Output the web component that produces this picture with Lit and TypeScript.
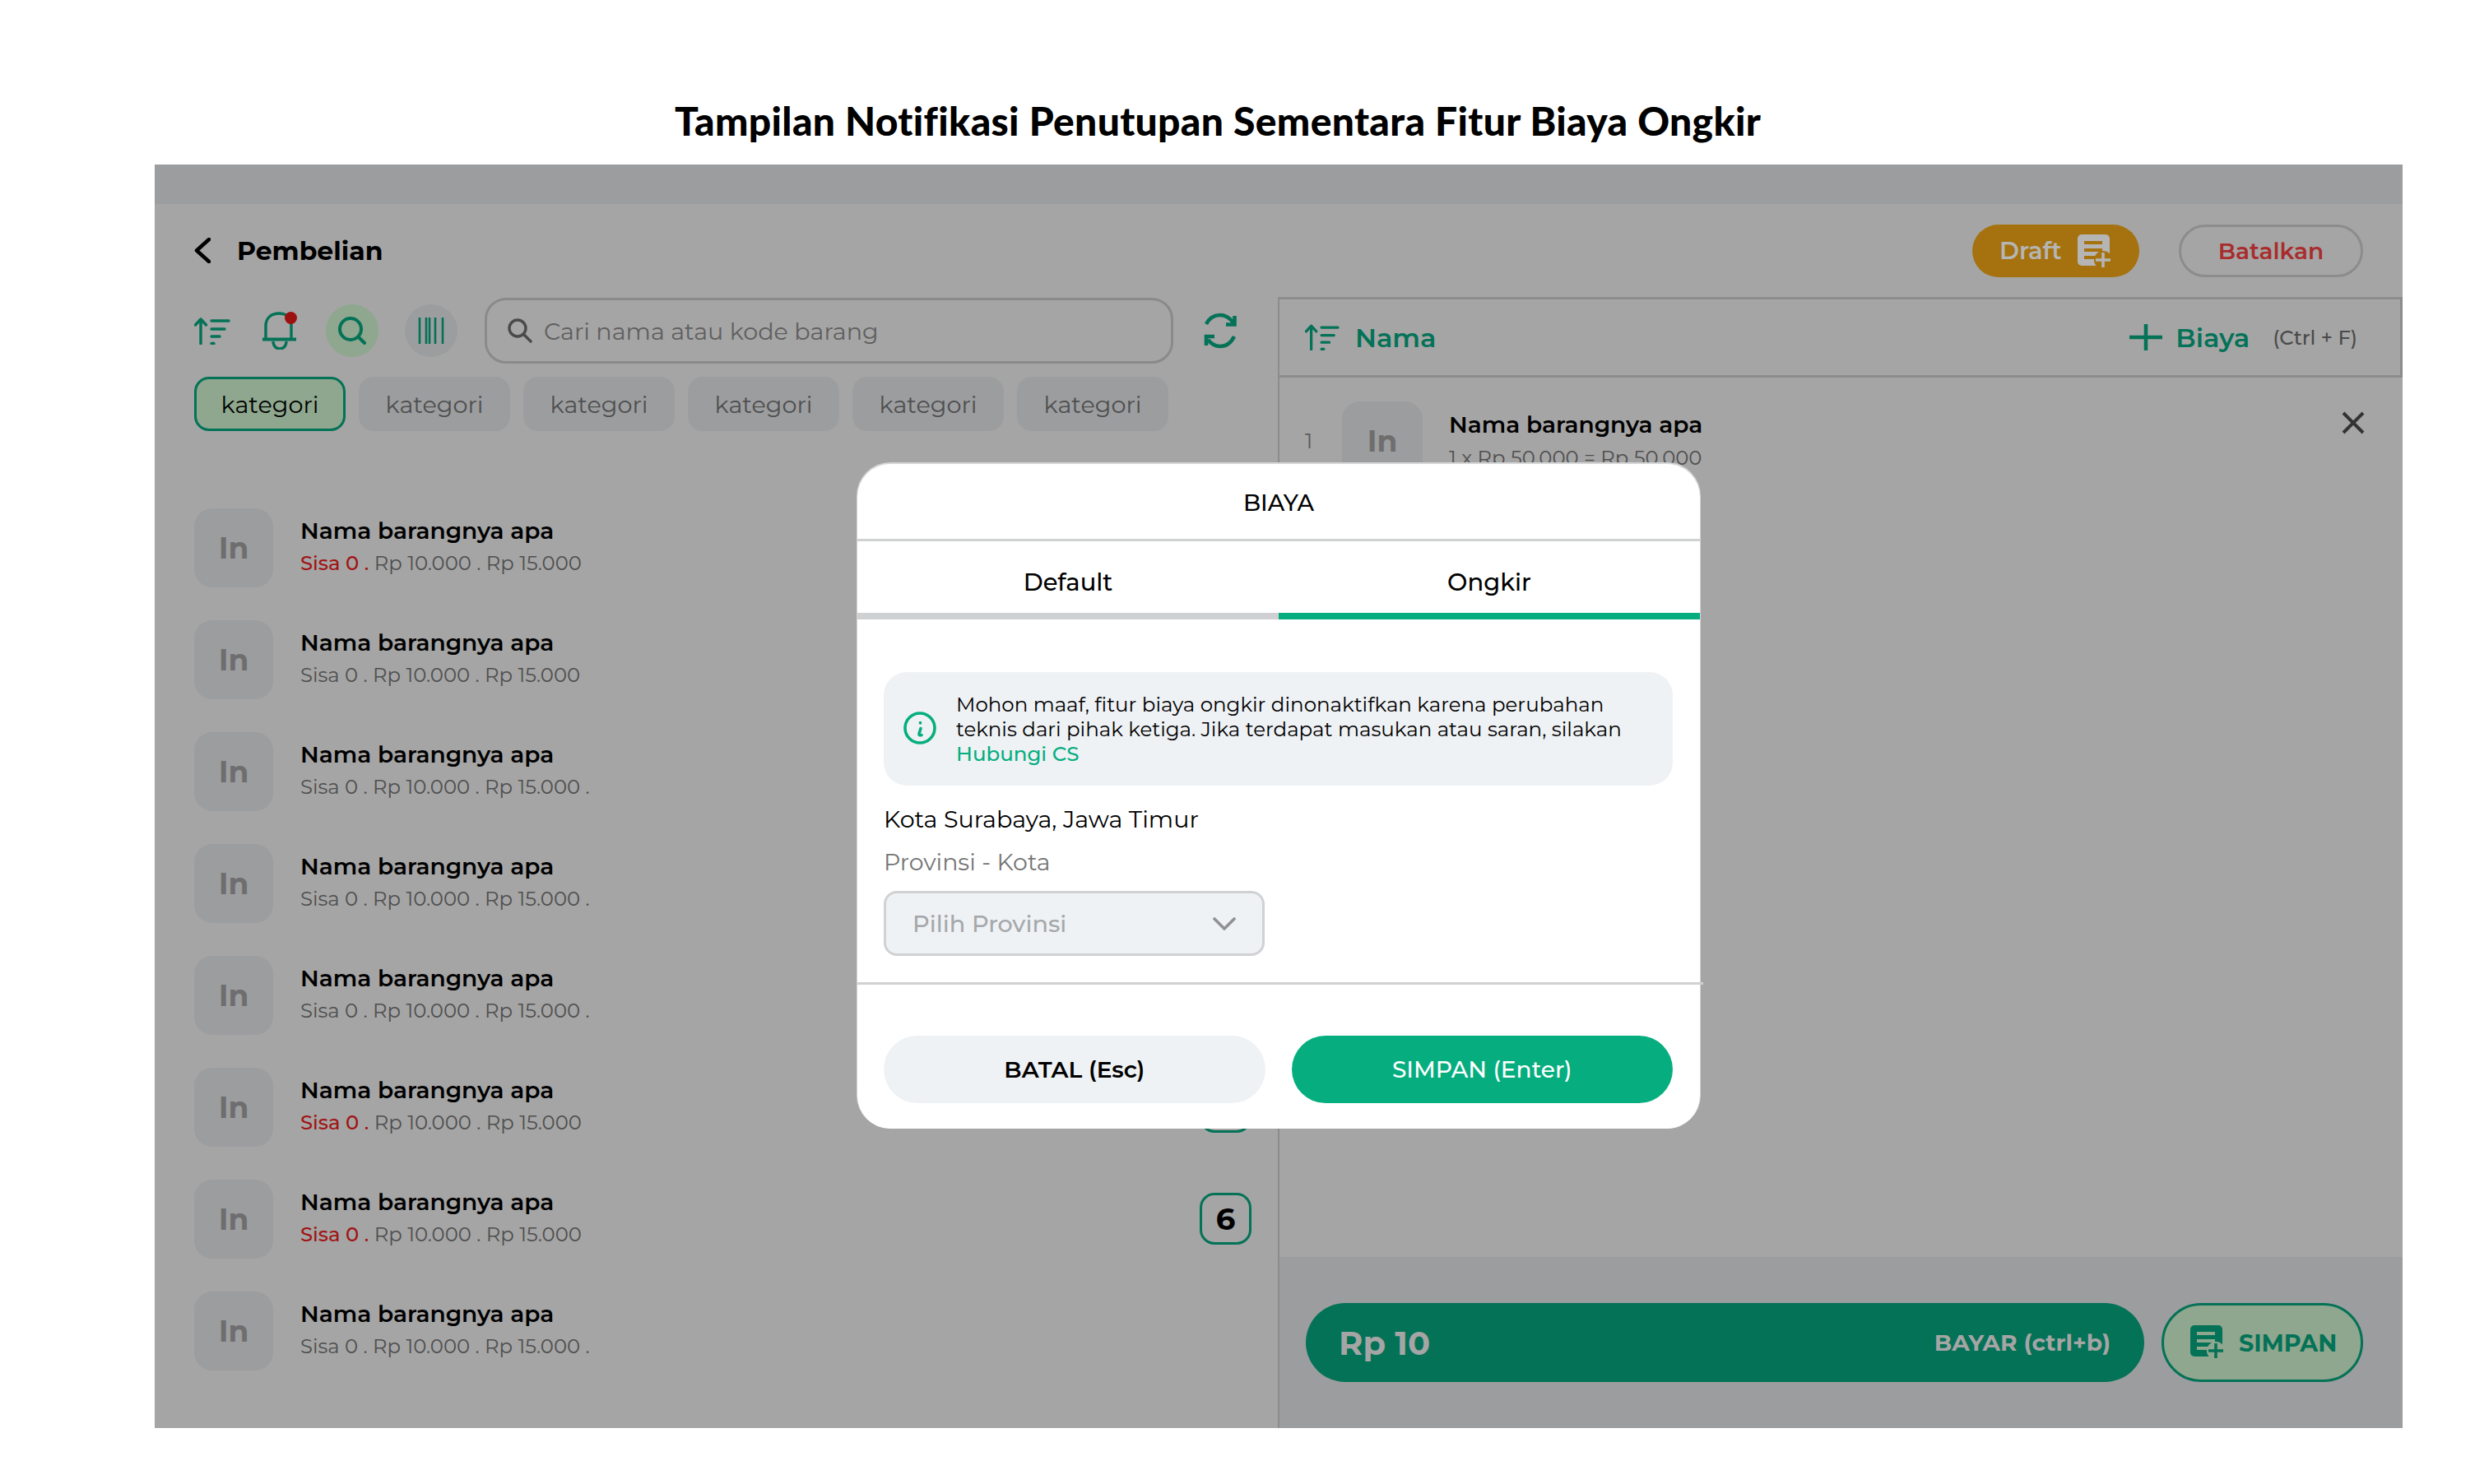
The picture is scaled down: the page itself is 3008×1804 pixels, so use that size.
import { LitElement, html, css } from "lit";
import { customElement } from "lit/decorators.js";

const sortIcon = (w: number, h: number) => html`<svg class="ic" width=${w} height=${h} viewBox="0 0 44 33" fill="none" stroke="#047257" stroke-width="3.4" stroke-linecap="round" stroke-linejoin="round"><path d="M8 32V2M1.5 9L8 2l6.5 7"/><path d="M21 4h21M21 14h16M21 23h10M21 31.5h3"/></svg>`;
const docIcon = (fg: string, bg: string) => html`<svg class="ic" width="42" height="42" viewBox="0 0 42 42"><rect x="0" y="0" width="39" height="38" rx="5" fill=${fg}/><path d="M8 10h22M8 19h22M8 28h13" stroke=${bg} stroke-width="4"/><circle cx="31" cy="31" r="11" fill=${bg}/><path d="M31 22v18M22 31h18" stroke=${fg} stroke-width="3.6"/></svg>`;

const rows = [
  { red: true, dot: false }, { red: false, dot: false }, { red: false, dot: true }, { red: false, dot: true },
  { red: false, dot: true }, { red: true, dot: false, badge: "" }, { red: true, dot: false, badge: "6" }, { red: false, dot: true },
];

@customElement("app-root")
export class AppRoot extends LitElement {
  static styles = css`
    :host { display: block; width: 3008px; height: 1804px; background: #fff; font-family: "Montserrat", Inter, "Liberation Sans", sans-serif; color: #000; overflow: hidden; }
    * { box-sizing: border-box; }
    .ic { display: block; flex: none; }
    .title { height: 200px; padding: 92px 0 0 820px; display: flex; align-items: center; font-family: Lato, "Open Sans", sans-serif; font-weight: 900; font-size: 48px; letter-spacing: 0.33px; white-space: nowrap; }
    .frame { position: relative; margin-left: 188px; width: 2732px; height: 1536px; background: #a5a5a5; display: flex; flex-direction: column; }
    .strip { height: 48px; background: #9c9d9f; flex: none; }
    .head { height: 113px; flex: none; display: flex; align-items: center; padding: 0 48px; }
    .back { margin-right: 32px; }
    .head h1 { margin: 0; font-size: 31.5px; font-weight: 700; flex: 1; }
    .draft { width: 203px; height: 64px; border-radius: 32px; background: #a5720f; color: #b5b5b5; display: flex; align-items: center; justify-content: space-between; padding: 0 33px 0 33px; font-size: 29px; font-weight: 600; }
    .draft .ic { margin: 3px 0 0 0; }
    .cancel { margin-left: 48px; width: 224px; height: 64px; border-radius: 32px; border: 3px solid #8c8c8c; color: #a82c2c; display: flex; align-items: center; justify-content: center; font-size: 28px; font-weight: 600; }
    .cols { flex: 1; display: flex; min-height: 0; }
    .left { width: 1367px; flex: none; border-right: 2px solid #8c8c8c; padding: 1px 0 0 48px; }
    .tools { height: 80px; display: flex; align-items: center; }
    .tools .m39 { margin-left: 39px; }
    .circle { width: 64px; height: 64px; border-radius: 50%; display: flex; align-items: center; justify-content: center; margin-left: 35px; background: #8fa78e; }
    .circle.off { background: #9c9d9f; margin-left: 32px; }
    .search { margin-left: 33px; width: 837px; height: 80px; border: 3px solid #8a8a8a; border-radius: 26px; display: flex; align-items: center; padding-left: 25px; gap: 14px; color: #5f5f5f; font-size: 28.6px; white-space: nowrap; }
    .refresh { margin-left: 36px; }
    .chips { margin-top: 16px; display: flex; gap: 16px; }
    .chip { width: 184px; height: 66px; border-radius: 18px; background: #9c9d9f; color: #4f4f4f; display: flex; align-items: center; justify-content: center; font-size: 28.7px; }
    .chip.on { background: #8fa78e; border: 3px solid #047257; color: #000; }
    .list { margin-top: 94px; display: flex; flex-direction: column; gap: 40px; }
    .row { height: 96px; display: flex; position: relative; padding-right: 32px; }
    .thumb { width: 96px; height: 96px; flex: none; border-radius: 22px; background: #9c9d9f; color: #6e6e6e; display: flex; align-items: center; justify-content: center; font-size: 36px; font-weight: 700; }
    .info { margin-left: 33px; flex: 1; }
    .name { font-size: 28px; font-weight: 600; line-height: 36px; margin-top: 9px; white-space: nowrap; }
    .sub { font-size: 24.3px; line-height: 32px; margin-top: 5px; color: #4f4f4f; white-space: nowrap; }
    .sub b { font-weight: 500; color: #a01414; }
    .badge { width: 63px; height: 63px; margin-top: 16px; border: 3px solid #047257; border-radius: 18px; display: flex; align-items: center; justify-content: center; font-size: 37px; font-weight: 700; }
    .right { flex: 1; display: flex; flex-direction: column; min-width: 0; }
    .rhead { height: 98px; flex: none; border-top: 3px solid #8c8c8c; border-bottom: 3px solid #8c8c8c; border-right: 3px solid #8c8c8c; display: flex; align-items: center; padding-left: 31px; color: #047257; font-size: 32px; font-weight: 600; }
    .rhead .nm { margin-left: 19px; flex: 1; }
    .rhead .bi { margin-left: 16px; }
    .rhead .ct { margin-left: 28px; margin-right: 52px; font-size: 24.3px; font-weight: 500; color: #4a4a4a; }
    .ritem { flex: 1; display: flex; padding: 29px 46px 0 31px; min-height: 0; }
    .ritem .no { width: 45px; padding-top: 32px; font-size: 26px; color: #5c5c5c; }
    .ritem .thumb { width: 98px; }
    .ritem .info { margin-left: 32px; }
    .ritem .name { margin-top: 10px; }
    .ritem .sub { margin-top: 6px; }
    .ritem .x { margin-top: 12px; }
    .foot { height: 208px; flex: none; background: #9c9d9f; display: flex; padding: 56px 47px 0 32px; gap: 21px; }
    .pay { width: 1019px; height: 96px; border-radius: 48px; background: #047257; color: #a5a5a5; display: flex; align-items: center; justify-content: space-between; padding: 0 41px 0 40px; font-weight: 700; }
    .pay .a { font-size: 40px; }
    .pay .b { font-size: 28px; font-weight: 700; }
    .sv { width: 245px; height: 96px; border-radius: 48px; background: #8fa78e; border: 3px solid #047257; color: #047257; display: flex; align-items: center; padding-left: 32px; gap: 17px; font-size: 28.5px; font-weight: 700; }
    .modal { position: absolute; left: 854px; top: 364px; width: 1024px; height: 808px; background: #fff; border-radius: 40px; box-shadow: 0 -1px 0 1px #d4d5d6; display: flex; flex-direction: column; }
    .mt { height: 94px; flex: none; display: flex; align-items: center; justify-content: center; font-size: 28px; font-weight: 500; border-bottom: 3px solid #d0d1d3; padding-top: 2px; }
    .tabs { height: 95px; flex: none; display: flex; }
    .tab { flex: 1 1 0; display: flex; align-items: center; justify-content: center; border-bottom: 8px solid #cfd0d2; font-size: 29px; font-weight: 500; padding-top: 12px; }
    .tab.on { border-bottom-color: #06ae7f; }
    .mb { padding: 64px 33px 0 32px; flex: 1; display: flex; flex-direction: column; }
    .note { height: 138px; flex: none; border-radius: 28px; background: #eff2f5; display: flex; align-items: center; padding: 0 24px; gap: 24px; font-size: 24.5px; line-height: 30px; }
    .note .ic { margin-top: -2px; }
    .note a { color: #06ae7f; font-weight: 500; display: block; }
    .city { margin-top: 21px; font-size: 28.6px; line-height: 40px; font-weight: 400; }
    .lbl { margin-top: 12px; font-size: 28.4px; line-height: 40px; color: #757575; }
    .sel { margin-top: 15px; width: 463px; height: 79px; flex: none; background: #eff2f5; border: 3px solid #d0d1d3; border-radius: 16px; display: flex; align-items: center; justify-content: space-between; padding: 0 32px 0 32px; font-size: 28.7px; font-weight: 500; color: #a5a8ab; }
    .rule { height: 3px; flex: none; background: #d0d1d3; margin: 32px -37px 0 -32px; }
    .btns { margin-top: 62px; display: flex; gap: 32px; }
    .btn { flex: 1 1 0; height: 82px; border-radius: 41px; background: #eff2f5; display: flex; align-items: center; justify-content: center; font-size: 28px; font-weight: 600; }
    .btn.go { background: #06ae7f; color: #fff; font-weight: 500; }
  `;

  renderRow(r: any) {
    return html`<div class="row">
      <div class="thumb">In</div>
      <div class="info">
        <div class="name">Nama barangnya apa</div>
        <div class="sub">${r.red ? html`<b>Sisa 0 .</b> Rp 10.000 . Rp 15.000` : html`Sisa 0 . Rp 10.000 . Rp 15.000${r.dot ? " ." : ""}`}</div>
      </div>
      ${r.badge !== undefined ? html`<div class="badge">${r.badge}</div>` : ""}
    </div>`;
  }

  render() {
    return html`
      <div class="title">Tampilan Notifikasi Penutupan Sementara Fitur Biaya Ongkir</div>
      <div class="frame">
        <div class="strip"></div>
        <div class="head">
          <svg class="ic back" width="20" height="31" viewBox="0 0 20 31" fill="none" stroke="#000" stroke-width="4.5" stroke-linecap="round" stroke-linejoin="round"><path d="M18 2L3 15.5 18 29"/></svg>
          <h1>Pembelian</h1>
          <div class="draft">Draft ${docIcon("#b5b5b5", "#a5720f")}</div>
          <div class="cancel">Batalkan</div>
        </div>
        <div class="cols">
          <div class="left">
            <div class="tools">
              ${sortIcon(44, 33)}
              <svg class="ic m39" width="42" height="46" viewBox="0 0 42 46" fill="none" stroke="#047257" stroke-width="3.4"><path d="M4 33V17C4 8 10 2 20 2s15 6 15 15v16"/><path d="M0 33.5h41" stroke-width="4"/><path d="M13 36c0 12 16 12 16 0"/><circle cx="34.5" cy="7.5" r="7.5" fill="#9c1010" stroke="none"/></svg>
              <div class="circle"><svg class="ic" width="34" height="34" viewBox="0 0 34 34" fill="none" stroke="#047257" stroke-width="4" stroke-linecap="round"><circle cx="15" cy="15" r="13"/><path d="M25 25l7 7"/></svg></div>
              <div class="circle off"><svg class="ic" width="32" height="32" viewBox="0 0 32 32" stroke="#047257" stroke-width="2.6"><path d="M2 0v32M10 0v32M14 0v32M21 0v32M30 0v32"/></svg></div>
              <div class="search">
                <svg class="ic" width="30" height="30" viewBox="0 0 30 30" fill="none" stroke="#4a4a4a" stroke-width="3.4" stroke-linecap="round"><circle cx="12" cy="12" r="10"/><path d="M20 20l8 8"/></svg>
                Cari nama atau kode barang
              </div>
              <svg class="ic refresh" width="42" height="44" viewBox="0 0 42 44" fill="none" stroke="#047257" stroke-width="4.6"><path d="M4 14C8 6 14 3 21 3c6 0 11 3 16 9"/><path d="M38.500 4v10.500H28"/><path d="M38 29c-4 8-10 12-17 12-6 0-11-3-15-8"/><path d="M14 29H4v11"/></svg>
            </div>
            <div class="chips">
              ${[0, 1, 2, 3, 4, 5].map((i) => html`<div class="chip ${i === 0 ? "on" : ""}">kategori</div>`)}
            </div>
            <div class="list">${rows.map((r) => this.renderRow(r))}</div>
          </div>
          <div class="right">
            <div class="rhead">
              ${sortIcon(42, 32)}
              <span class="nm">Nama</span>
              <svg class="ic" width="40" height="32" viewBox="0 0 40 32" stroke="#047257" stroke-width="4.5"><path d="M20 0v32M0 16h40"/></svg>
              <span class="bi">Biaya</span>
              <span class="ct">(Ctrl + F)</span>
            </div>
            <div class="ritem">
              <div class="no">1</div>
              <div class="thumb">In</div>
              <div class="info">
                <div class="name">Nama barangnya apa</div>
                <div class="sub">1 x Rp 50.000 = Rp 50.000</div>
              </div>
              <svg class="ic x" width="28" height="28" viewBox="0 0 28 28" stroke="#333" stroke-width="4"><path d="M2 2l24 24M26 2L2 26"/></svg>
            </div>
            <div class="foot">
              <div class="pay"><span class="a">Rp 10</span><span class="b">BAYAR (ctrl+b)</span></div>
              <div class="sv">${docIcon("#047257", "#8fa78e")} SIMPAN</div>
            </div>
          </div>
        </div>
        <div class="modal">
          <div class="mt">BIAYA</div>
          <div class="tabs"><div class="tab">Default</div><div class="tab on">Ongkir</div></div>
          <div class="mb">
            <div class="note">
              <svg class="ic" width="40" height="40" viewBox="0 0 40 40" fill="none" stroke="#06ae7f" stroke-width="3.6" stroke-linecap="round"><circle cx="20" cy="20" r="18"/><path d="M21 20.500l-2 6.500c-.3 1.500 1 2.200 3 1.600"/><path d="M20.500 13.500v.4"/></svg>
              <div>Mohon maaf, fitur biaya ongkir dinonaktifkan karena perubahan<br>teknis dari pihak ketiga. Jika terdapat masukan atau saran, silakan<a>Hubungi CS</a></div>
            </div>
            <div class="city">Kota Surabaya, Jawa Timur</div>
            <div class="lbl">Provinsi - Kota</div>
            <div class="sel">Pilih Provinsi
              <svg class="ic" width="28" height="16" viewBox="0 0 28 16" fill="none" stroke="#8f9194" stroke-width="3.6" stroke-linecap="round" stroke-linejoin="round"><path d="M2 2l12 12L26 2"/></svg>
            </div>
            <div class="rule"></div>
            <div class="btns"><div class="btn">BATAL (Esc)</div><div class="btn go">SIMPAN (Enter)</div></div>
          </div>
        </div>
      </div>
    `;
  }
}
